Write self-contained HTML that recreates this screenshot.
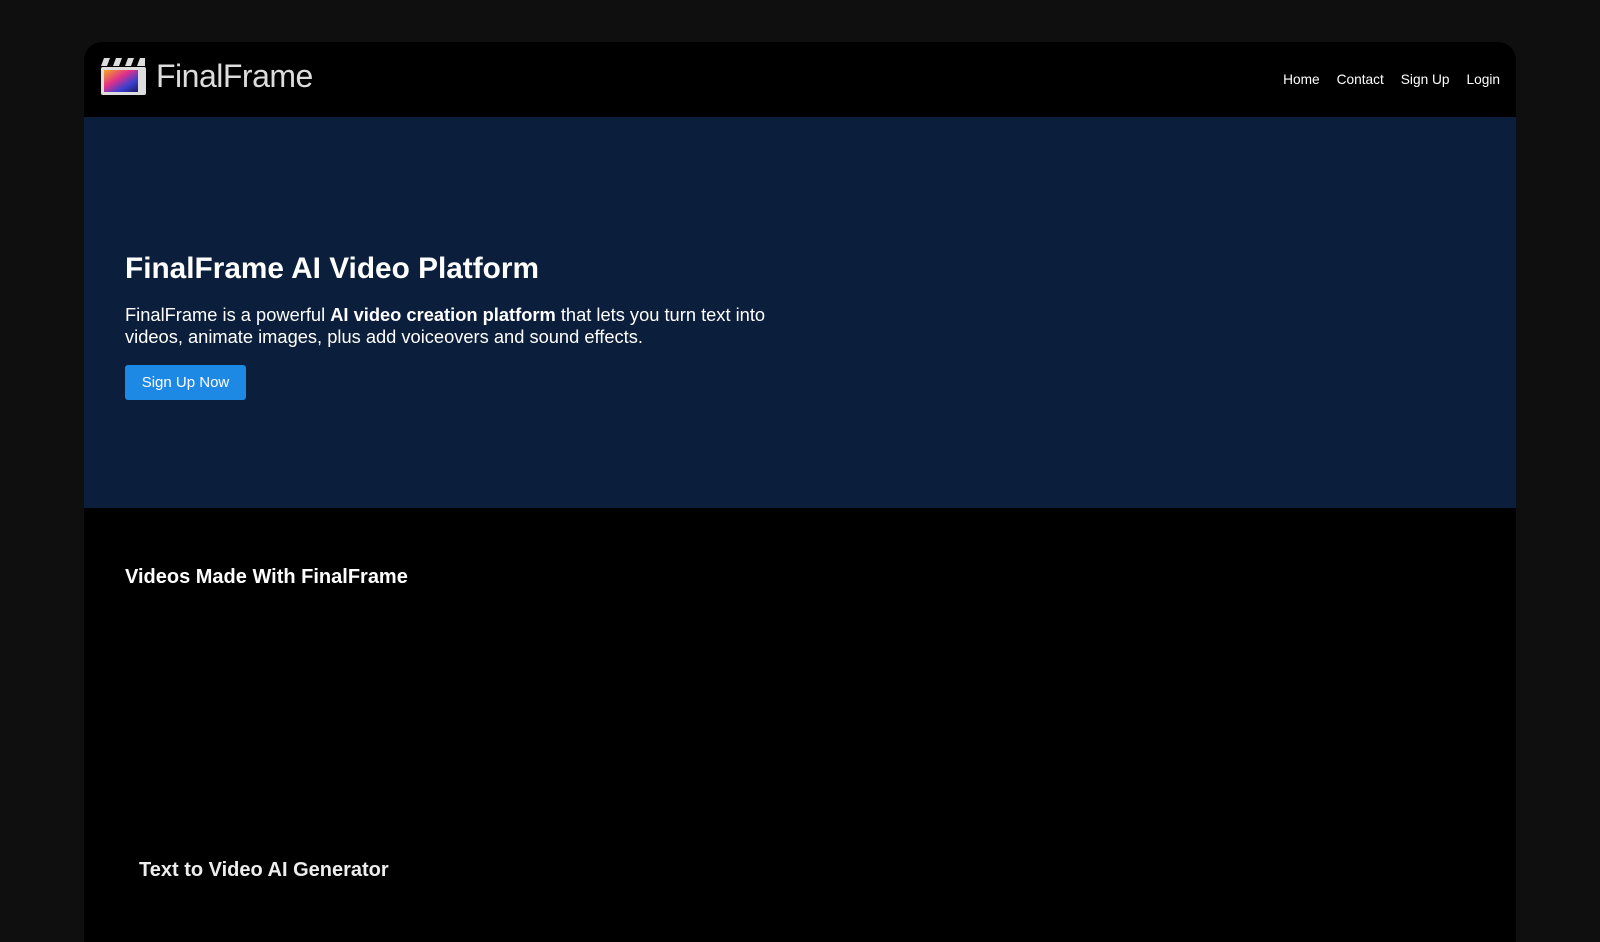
<!DOCTYPE html>
<html><head><style>
body{margin:0;background:#0f0f0f;width:1600px;height:900px;overflow:hidden;font-family:"Liberation Sans",Arial,sans-serif;color:#fff}
.c{position:absolute;left:84px;top:42px;width:1432px;height:900px;background:#000;border-radius:18px 18px 0 0;overflow:hidden}
.hdr{height:75px;position:relative}
.logo{position:absolute;left:16px;top:15px;display:flex;align-items:center}
.logo span{font-size:32px;color:#ddd;margin-left:9px;letter-spacing:-0.5px}
.nav{position:absolute;right:16px;top:30px;font-size:13.7px}
.nav a{color:#fff;text-decoration:none;margin-left:17px}
.hero{background:#0b1e3b;height:391px;position:relative}
h1{position:absolute;left:41px;top:135px;margin:0;font-size:29.8px}
.p{position:absolute;left:41px;top:187px;font-size:18.3px;line-height:22px;width:680px}
.btn{position:absolute;left:41px;top:248px;width:121px;height:35px;background:#1e88e5;border-radius:3px;font-size:15px;line-height:35px;text-align:center}
h2{position:absolute;left:41px;top:524px;margin:0;font-size:20px}
h3{position:absolute;left:55px;top:817px;margin:0;font-size:20px;color:#eee}
</style></head><body>
<div class="c">
<div class="hdr">
<div class="logo">
<svg width="47" height="39" viewBox="0 0 47 39">
<rect x="1" y="10" width="45" height="28" rx="2" fill="#ddd"/>
<defs><linearGradient id="g" x1="0" y1="0" x2="1" y2="1"><stop offset="0" stop-color="#f5a623"/><stop offset=".4" stop-color="#e0308a"/><stop offset=".7" stop-color="#3b3fd0"/><stop offset="1" stop-color="#1a1a60"/></linearGradient></defs>
<rect x="4" y="13" width="34" height="22" fill="url(#g)"/>
<path d="M1 9 L4 1 H10 L7 9Z M13 9 L16 1 H22 L19 9Z M25 9 L28 1 H34 L31 9Z M37 9 L40 1 H45 V9Z" fill="#ddd"/>
</svg>
<span>FinalFrame</span></div>
<div class="nav"><a>Home</a><a>Contact</a><a>Sign Up</a><a>Login</a></div>
</div>
<div class="hero">
<h1>FinalFrame AI Video Platform</h1>
<div class="p">FinalFrame is a powerful <b>AI video creation platform</b> that lets you turn text into videos, animate images, plus add voiceovers and sound effects.</div>
<div class="btn">Sign Up Now</div>
</div>
<h2>Videos Made With FinalFrame</h2>
<h3>Text to Video AI Generator</h3>
</div>
</body></html>
